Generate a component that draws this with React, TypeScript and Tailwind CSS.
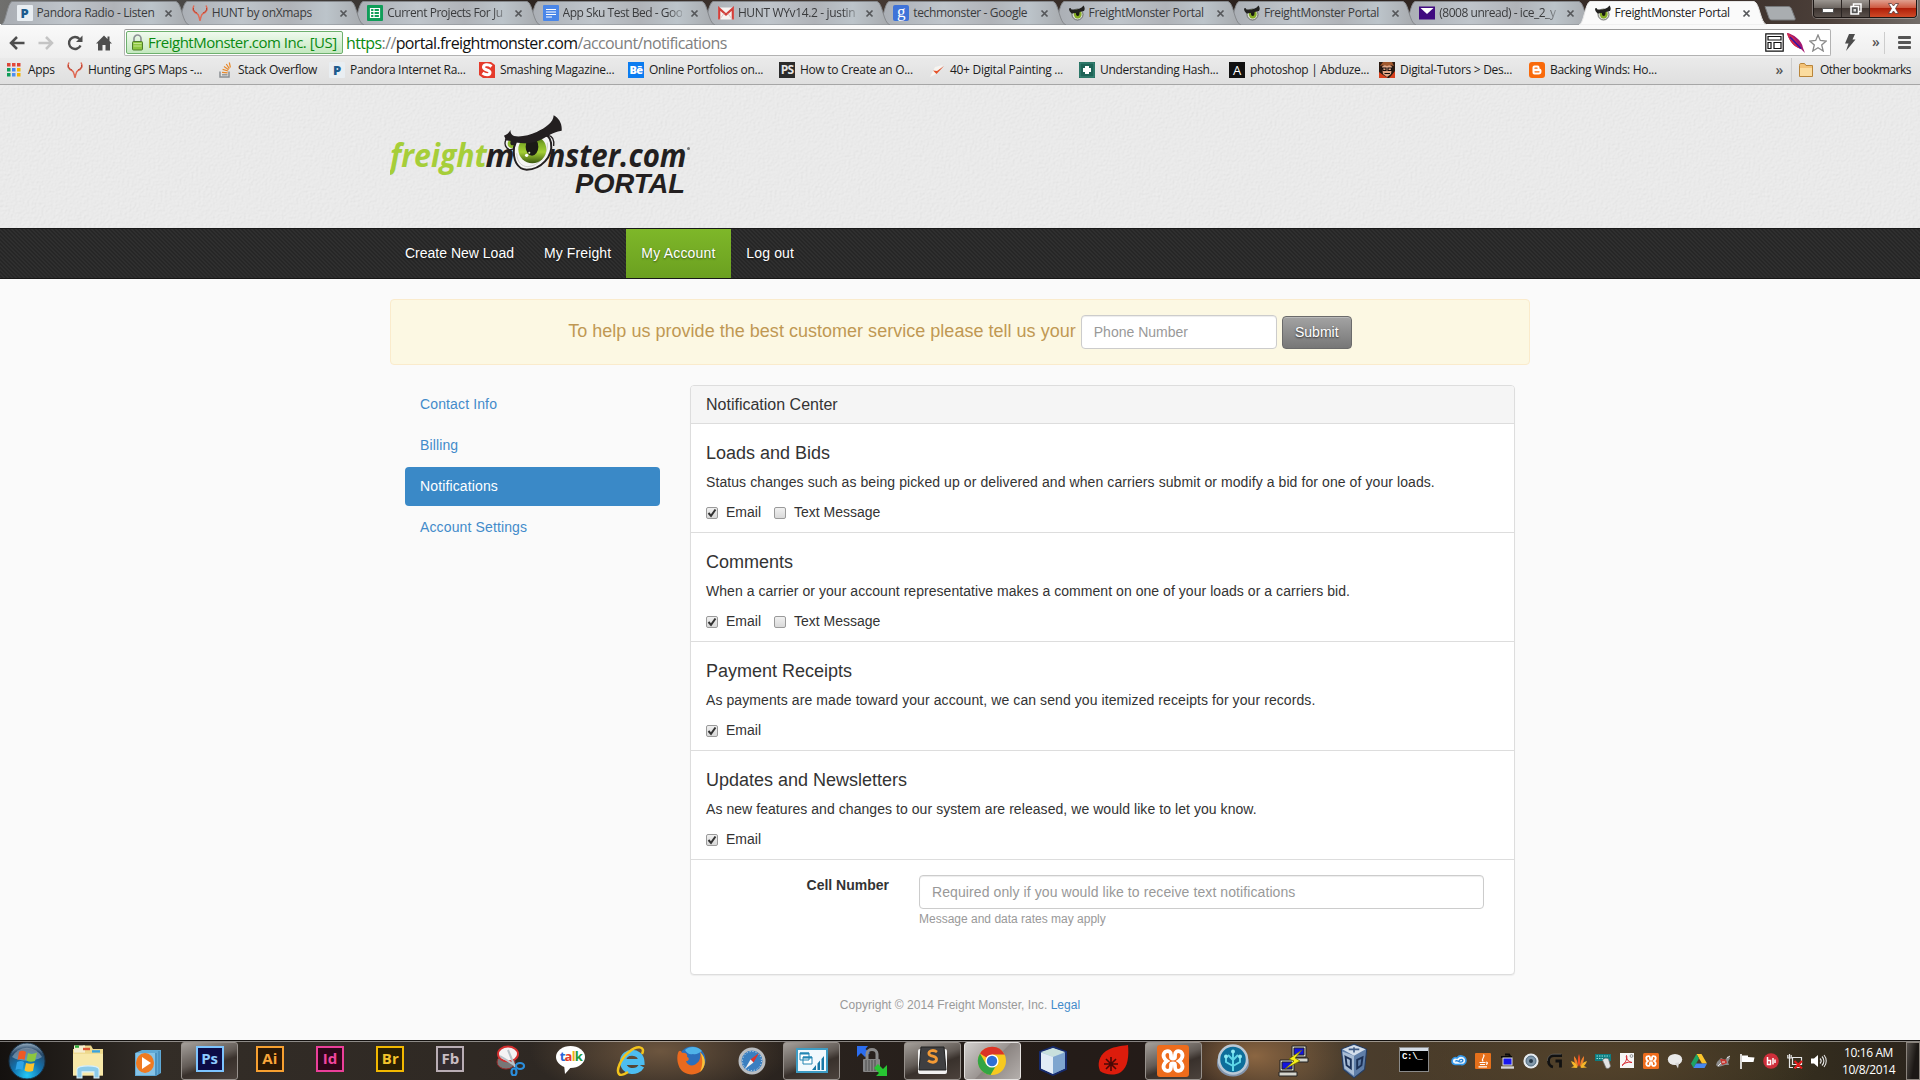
import React from "react";
import type { ReactNode } from "react";

const ui = "font-['Open_Sans',sans-serif]";

/* ---------- small brand icons ---------- */

function Svg({ s = 16, vb = "0 0 16 16", children }: { s?: number; vb?: string; children: ReactNode }) {
  return (
    <svg width={s} height={s} viewBox={vb} className="shrink-0" fill="none">
      {children}
    </svg>
  );
}

const Pandora = () => (
  <span className="flex h-4 w-4 shrink-0 items-center justify-center rounded-[1px] bg-[#e9eef2] font-['Open_Sans',sans-serif] text-[13px] leading-4 font-extrabold text-[#1d5c8e]">
    P
  </span>
);
const Antler = () => (
  <Svg>
    <path d="M2 .5C0 4 1 7 5 8.5C7 9.5 7 12 8 15.5C9 12 9 9.500 11 8.500C15 7 16 4 14 .5" stroke="#df6a55" strokeWidth="1.500" />
    <path d="M1.500 3C1 6 3 7 5 8M14.500 3C15 6 13 7 11 8" stroke="#b94331" strokeWidth="1" />
  </Svg>
);
const Sheets = () => (
  <Svg>
    <rect width="16" height="16" rx="1" fill="#0f9d58" />
    <path d="M3.500 3.500h9v9h-9zM3.500 6.500h9M3.500 9.500h9M7 3.500v9" stroke="#fff" strokeWidth="1.200" />
  </Svg>
);
const Docs = () => (
  <Svg>
    <rect width="16" height="16" rx="1" fill="#4a86e8" />
    <path d="M3 4.500h10M3 7h10M3 9.500h10M3 12h6" stroke="#fff" strokeWidth="1.200" />
  </Svg>
);
const Gmail = () => (
  <Svg>
    <rect y="2.500" width="16" height="12" rx="1" fill="#f6f2f1" />
    <path d="M1.200 14.500V3.500L8 9.500L14.800 3.500V14.500" stroke="#d23f3a" strokeWidth="2.200" />
    <path d="M2 14L6 8.500M14 14L10 8.500" stroke="#ddc9c7" />
  </Svg>
);
const Google = () => (
  <span className="flex h-4 w-4 shrink-0 items-center justify-center rounded-[2px] bg-[#3f73d8] pb-[3px] font-['Liberation_Serif',serif] text-[17px] leading-4 text-white">
    g
  </span>
);
const Monster = () => (
  <Svg>
    <ellipse cx="8.500" cy="9.500" rx="5.500" ry="5.500" fill="#d9dcd2" stroke="#444" strokeWidth=".7" />
    <ellipse cx="8.700" cy="9" rx="3.900" ry="4.600" fill="#86ad25" />
    <ellipse cx="8.700" cy="8" rx="1.800" ry="3" fill="#1a1a12" />
    <path d="M0 3.500L1.500 3L2.500 4.500C7 5 12 4 14.500 .5C16 2.500 16 4.500 15 6C11 6.500 10 8 6.500 8L2.500 8.500C1 7 0 5.500 0 3.500Z" fill="#22211f" />
  </Svg>
);
const Ymail = () => (
  <Svg>
    <rect y="1.500" width="16" height="13" fill="#400a80" />
    <path d="M1.500 3H14.500L8 9Z" fill="#fff" />
  </Svg>
);
const AppsGrid = () => (
  <Svg s={14} vb="0 0 14 14">
    {["#db4437", "#e5493a", "#db4437", "#0f9d58", "#4285f4", "#f4b400", "#0f9d58", "#4f8ff0", "#f4b400"].map((c, i) => (
      <rect key={i} x={(i % 3) * 5} y={Math.floor(i / 3) * 5} width="3.500" height="3.500" fill={c} />
    ))}
  </Svg>
);
const StackO = () => (
  <Svg>
    <path d="M3 9.500V15H12V9.500" stroke="#8b8f92" strokeWidth="1.500" />
    <path d="M5 12.800H10.500" stroke="#8b8f92" strokeWidth="1.300" />
    <path d="M5 10.300L10.600 10.900M5.600 7.400L11 9M7 4.600L11.600 7.800M9.300 2L12.300 6.600M12.300 .5L13.400 5.500" stroke="#e8892b" strokeWidth="1.200" />
  </Svg>
);
const Smash = () => (
  <Svg>
    <path d="M0 0H12L16 3V16H4L0 13Z" fill="#e53b2c" />
    <path d="M12.500 4.500C9 1.500 4 2.500 4.500 5.500C5 8.500 11 7.500 11 10.500C11 13.500 6 13 3.500 11" stroke="#fff" strokeWidth="3" />
  </Svg>
);
const Letter = ({ t, cls }: { t: string; cls: string }) => (
  <span className={`flex h-4 w-4 shrink-0 items-center justify-center leading-4 ${cls}`}>{t}</span>
);
const Paint = () => (
  <Svg>
    <path d="M1 15L6 5L14 3L7 12Z" fill="#f7f4f0" />
    <path d="M4 8.500L8 9L15 4L7.500 12Z" fill="#e5532a" />
  </Svg>
);
const Hash = () => (
  <Svg>
    <rect width="16" height="16" fill="#1e6457" />
    <rect x="1" y="1" width="14" height="14" stroke="#3c8b7c" />
    <path d="M6 4H10V6H12V10H10V12H6V10H4V6H6Z" fill="#fff" />
  </Svg>
);
const Tutor = () => (
  <Svg>
    <rect width="16" height="16" fill="#2a1a12" />
    <path d="M0 16V10L4 13L9 16ZM16 16V9L12 14L10 16Z" fill="#d9401c" />
    <path d="M3 5C4 2 12 2 13 5L12 12L8 15L4 12Z" fill="#e2a685" />
    <path d="M1 4L4 0H13L15 4L11 3L8 4L5 3Z" fill="#a1592e" />
    <path d="M3.500 6H7V8.500H4ZM9 6H12.500V8.500H9ZM5.500 11.500H11" stroke="#141010" strokeWidth="1.200" />
  </Svg>
);
const Blogger = () => (
  <Svg>
    <rect width="16" height="16" rx="3" fill="#f96a0b" />
    <path d="M5.500 3.500H8.500C10.500 3.500 10.500 5 10.500 6.500C12.500 7 12.500 8 12.500 9.500C12.500 11.500 11.500 12.500 9.500 12.500H5.500C4 12.500 3.500 11.500 3.500 10V6C3.500 4.500 4 3.500 5.500 3.500Z" fill="#fff" />
    <path d="M6 6.200H8M6 9.800H10" stroke="#f96a0b" strokeWidth="1.300" strokeLinecap="round" />
  </Svg>
);
const Folder = () => (
  <Svg>
    <path d="M1.500 3.500C1.500 2 2 1.500 3 1.500H6.500L8 3.500H14.500V14.500H1.500Z" fill="#f3c277" stroke="#b9853a" />
    <path d="M2 6H14V14H2Z" fill="#fbdc9f" />
  </Svg>
);
const Xampp = ({ s = 16 }: { s?: number }) => (
  <Svg s={s}>
    <rect width="16" height="16" rx="1.500" fill="#ee6c1c" />
    <path d="M4 3.500C6 2.500 7 3.500 7 5V6C7 7 9 7 9 6V5C9 3.500 10 2.500 12 3.500C13.500 5 12.500 7 11 8C12.500 9 13.500 11 12 12.500C10 13.500 9 12.500 9 11V10C9 9 7 9 7 10V11C7 12.500 6 13.500 4 12.500C2.500 11 3.500 9 5 8C3.500 7 2.500 5 4 3.500Z" stroke="#fff" strokeWidth="1.900" />
  </Svg>
);

/* ---------- tab strip ---------- */

const tabs: { title: string; icon: ReactNode; active?: boolean }[] = [
  { title: "Pandora Radio - Listen", icon: <Pandora /> },
  { title: "HUNT by onXmaps", icon: <Antler /> },
  { title: "Current Projects For Ju", icon: <Sheets /> },
  { title: "App Sku Test Bed - Goo", icon: <Docs /> },
  { title: "HUNT WYv14.2 - justin", icon: <Gmail /> },
  { title: "techmonster - Google", icon: <Google /> },
  { title: "FreightMonster Portal", icon: <Monster /> },
  { title: "FreightMonster Portal", icon: <Monster /> },
  { title: "(8008 unread) - ice_2_y", icon: <Ymail /> },
  { title: "FreightMonster Portal", icon: <Monster />, active: true },
];

function TabStrip() {
  return (
    <div className="relative flex h-6 bg-[linear-gradient(90deg,#70706e_0,#4c4a48_8%,#2d2521_28%,#463a33_45%,#2a201c_66%,#3c302b_90%,#4b3f39_95%,#736d69_100%)]">
      {tabs.map((t, i) => (
        <div key={i} className="relative flex h-6 w-[175.35px] shrink-0 items-center pt-0.5 pl-[16.500px]" style={{ zIndex: t.active ? 30 : 20 - i }}>
          <svg className="absolute top-0 left-0" width="192" height="25" viewBox="0 0 192 25">
            <defs>
              <linearGradient id={`tab${i}`} x1="0" y1="0" x2="1" y2="0">
                <stop offset="0" stopColor="#a9adb3" />
                <stop offset=".35" stopColor="#bfc5cb" />
                <stop offset=".6" stopColor="#b0b3b8" />
                <stop offset=".8" stopColor="#bcc4ca" />
                <stop offset="1" stopColor="#a6a9ad" />
              </linearGradient>
            </defs>
            <path
              d="M1 25C6 24 7 3 12 1.500H176C182 3 182 23 189 25Z"
              fill={t.active ? "#fafafa" : `url(#tab${i})`}
              stroke={t.active ? "#e6e6e6" : "#85888c"}
              strokeWidth="1"
            />
          </svg>
          <span className="relative flex items-center">
            {t.icon}
            <span
              className={`ml-1 w-[119px] text-[12px] leading-4 whitespace-nowrap ${
                i === 2 || i === 3 || i === 4 || i === 8 ? "[mask-image:linear-gradient(90deg,#000_88%,rgba(0,0,0,.25))]" : ""
              } ${i === 2 || i === 3 || i === 8 ? "tracking-[-0.47px]" : "tracking-[-0.35px]"} ${t.active ? "text-[#222]" : "text-[#3a3b3d]"}`}
            >
              {t.title}
            </span>
            <svg width="9" height="9" viewBox="0 0 9 9" className="ml-[8px]">
              <path d="M1.500 1.500L7.500 7.500M7.500 1.500L1.500 7.500" stroke="#55575a" strokeWidth="1.700" />
            </svg>
          </span>
        </div>
      ))}
      <svg width="32" height="16" viewBox="0 0 32 16" className="relative z-40 mt-1.5 ml-[11px] shrink-0">
        <path d="M1 .5H24C26 .5 27 1.500 27.500 3L31 12C31.500 13.500 31 14 30 14H8C6.500 14 5.500 13.500 5 12Z" fill="#a9adb0" stroke="#77797b" />
      </svg>
      <div className="absolute top-0 right-[3px] z-40 flex h-[18px] w-[104px] overflow-hidden rounded-b-[4px] border border-t-0 border-[#1c1715] text-white ring-1 ring-white/30">
        <span className="flex w-[28px] items-center justify-center border-r border-[#2a2422] bg-[linear-gradient(#9b9691,#6f6863_45%,#3e3531_50%,#59504b)]">
          <span className="mt-1 h-[5px] w-[12px] border border-[#555] bg-white" />
        </span>
        <span className="flex w-[28px] items-center justify-center border-r border-[#2a2422] bg-[linear-gradient(#9b9691,#6f6863_45%,#3e3531_50%,#59504b)]">
          <svg width="12" height="12" viewBox="0 0 12 12" fill="none">
            <path d="M3.500 3V1H11V8.500H9" stroke="#fff" strokeWidth="1.500" />
            <rect x="1" y="3.500" width="7.500" height="7.500" fill="#555" stroke="#fff" strokeWidth="1.500" />
            <rect x="3.500" y="6" width="2.500" height="2.500" fill="#ddd" />
          </svg>
        </span>
        <span className="flex flex-1 items-center justify-center bg-[linear-gradient(#e0a08f,#cf5a41_45%,#b01f08_50%,#cf4a28)]">
          <svg width="13" height="11" viewBox="0 0 13 11">
            <path d="M1.500 .5H4.500L6.500 3L8.500 .5H11.500L8.500 5.500L11.500 10.500H8.500L6.500 8L4.500 10.500H1.500L4.500 5.500Z" fill="#fff" stroke="#5a3a38" strokeWidth=".8" />
          </svg>
        </span>
      </div>
    </div>
  );
}

/* ---------- toolbar & bookmarks ---------- */

function Toolbar() {
  return (
    <div className="flex h-[34px] items-center bg-[linear-gradient(#fafafa,#eeeeee)] pt-[3px]">
      <div className="flex w-[124px] items-center gap-[13px] pl-[9px] text-[#4e4e4e]">
        <svg width="16" height="16" viewBox="0 0 16 16" fill="none" stroke="currentColor" strokeWidth="2.500">
          <path d="M8 2L2 8L8 14M2 8H15.500" />
        </svg>
        <svg width="16" height="16" viewBox="0 0 16 16" fill="none" stroke="#c4c4c4" strokeWidth="2.500">
          <path d="M8 2L14 8L8 14M14 8H.5" />
        </svg>
        <svg width="16" height="16" viewBox="0 0 16 16" fill="none">
          <path d="M13.500 10.500A6 6 0 1 1 12.500 4" stroke="currentColor" strokeWidth="2.400" />
          <path d="M15.500 .5V7H9Z" fill="currentColor" />
        </svg>
        <svg width="16" height="16" viewBox="0 0 16 16" fill="currentColor">
          <path d="M8 .5L11.500 4V1.500H13.500V6L16 8.500H14V15.500H9.500V10H6.500V15.500H2V8.500H0Z" />
        </svg>
      </div>
      <div className="flex h-[27px] flex-1 items-center rounded-[2px] border border-[#b2b2b2] border-t-[#9c9c9c] bg-white">
        <div className="ml-px flex h-[23px] w-[217px] shrink-0 items-center rounded-[2px] border border-[#6eb06e] bg-[linear-gradient(#f0faee,#c4e8c0)] pl-[4px] text-[15px] tracking-[-0.51px] whitespace-nowrap text-[#0b8a12]">
          <svg width="13" height="17" viewBox="0 0 13 17" fill="none" className="mr-[4px] shrink-0">
            <path d="M3 8V4.500A3.500 3.500 0 0 1 10 4.500V8" stroke="#8d9496" strokeWidth="1.700" />
            <rect x="1.500" y="7.500" width="10" height="8.500" rx="1" fill="#8cc63f" stroke="#4e7d2c" />
            <path d="M2.500 9.500H10.500M2.500 12H10.500" stroke="#c3e58e" />
          </svg>
          FreightMonster.com Inc. [US]
        </div>
        <div className="ml-[3px] flex-1 text-[16px] tracking-[-0.62px] whitespace-nowrap text-[#808080]">
          <span className="text-[#0b8a12]">https</span>://<span className="text-[#111]">portal.freightmonster.com</span>/account/notifications
        </div>
        <svg width="19" height="19" viewBox="0 0 19 19" fill="#fff" stroke="#111" strokeWidth="1.200" className="mr-[3px]">
          <path d="M.8 .8H18.200V18.200H.8ZM3 3.500H16V7H3ZM3 9.500H6V15.500H3ZM9 9.500H16V15.500H9Z" />
        </svg>
        <svg width="18" height="20" viewBox="0 0 18 20" className="mr-[4px]">
          <path d="M0 0C6 1 15 7 16 15L18 20L14 16C7 14 2 8 0 0Z" fill="#a3166f" />
          <path d="M0 0C5 2 9 6 11 11L14 16C7 14 2 8 0 0Z" fill="#d02a4c" />
          <path d="M3 4L14 15.500" stroke="#3312a8" strokeWidth="1.700" />
        </svg>
        <svg width="18" height="18" viewBox="0 0 18 18" fill="#fff" stroke="#8a8a8a" strokeWidth="1.300" className="mr-[3px]">
          <path d="M9 1L11.300 6.500L17.200 7L12.700 11L14.200 17L9 13.800L3.800 17L5.300 11L.8 7L6.700 6.500Z" />
        </svg>
      </div>
      <div className="flex w-[89px] items-center">
        <svg width="12" height="17" viewBox="0 0 12 17" className="ml-[13px]">
          <path d="M5 0H11L8.500 5.500H11.500L2 17L4.500 9.500H1Z" fill="#4c4c4c" />
        </svg>
        <span className="ml-[16px] pb-0.5 text-[14px] font-semibold text-[#555]">»</span>
        <span className="ml-1 h-[22px] w-px bg-[#cdcdcd]" />
        <span className="ml-[13px] flex w-[13px] flex-col gap-[2px]">
          <i className="h-[3px] rounded-[1px] bg-[#555]" />
          <i className="h-[3px] rounded-[1px] bg-[#555]" />
          <i className="h-[3px] rounded-[1px] bg-[#555]" />
        </span>
      </div>
    </div>
  );
}

const bookmarks: { t: string; w: string; icon: ReactNode }[] = [
  { t: "Apps", w: "w-[60px]", icon: <span className="w-4"><AppsGrid /></span> },
  { t: "Hunting GPS Maps -...", w: "w-[150px]", icon: <Antler /> },
  { t: "Stack Overflow", w: "w-[112px]", icon: <StackO /> },
  { t: "Pandora Internet Ra...", w: "w-[150px]", icon: <Pandora /> },
  { t: "Smashing Magazine...", w: "w-[149px]", icon: <Smash /> },
  { t: "Online Portfolios on...", w: "w-[151px]", icon: <Letter t="Bē" cls="bg-[#0b7cf0] text-[11px] font-extrabold tracking-[-0.5px] text-white" /> },
  { t: "How to Create an O...", w: "w-[150px]", icon: <Letter t="PS" cls="bg-[#2b2b2b] text-[12px] font-bold tracking-[-0.8px] text-[#e6e6e6]" /> },
  { t: "40+ Digital Painting ...", w: "w-[150px]", icon: <Paint /> },
  { t: "Understanding Hash...", w: "w-[150px]", icon: <Hash /> },
  { t: "photoshop | Abduze...", w: "w-[150px]", icon: <Letter t="A" cls="bg-[#111] text-[13px] text-white" /> },
  { t: "Digital-Tutors > Des...", w: "w-[150px]", icon: <Tutor /> },
  { t: "Backing Winds: Ho...", w: "w-[150px]", icon: <Blogger /> },
];

function Bookmarks() {
  return (
    <div className="flex h-[27px] items-center border-b border-[#a6a6a6] bg-[linear-gradient(#eaeaea,#dfdfdf)] pb-0.5 pl-[7px] text-[12px] tracking-[-0.3px] text-[#1c1c1c]">
      {bookmarks.map((b) => (
        <div key={b.t} className={`flex shrink-0 items-center gap-[5px] whitespace-nowrap ${b.w}`}>
          {b.icon}
          {b.t}
        </div>
      ))}
      <span className="ml-auto pb-0.5 text-[14px] font-semibold text-[#555]">»</span>
      <span className="ml-[8px] h-6 w-px bg-[#cdcdcd]" />
      <span className="flex w-[128px] items-center gap-[6px] pl-[6px] tracking-[-0.5px]">
        <Folder />
        Other bookmarks
      </span>
    </div>
  );
}

/* ---------- page ---------- */

function Logo() {
  return (
    <svg width="310" height="90" viewBox="0 0 310 90" className="block">
      <defs>
        <linearGradient id="iris" x1="0" y1="0" x2="0" y2="1">
          <stop offset="0" stopColor="#3d5c12" />
          <stop offset=".3" stopColor="#7fae26" />
          <stop offset=".6" stopColor="#a4cf35" />
          <stop offset="1" stopColor="#39560f" />
        </linearGradient>
      </defs>
      <g fontFamily="'Open Sans'" fontWeight="700" fontStyle="italic" fontSize="32">
        <text x="0" y="57" textLength="97" lengthAdjust="spacingAndGlyphs" fill="#a6ce39">freight</text>
        <text x="95.500" y="57" textLength="29" lengthAdjust="spacingAndGlyphs" fill="#231f20">m</text>
        <text x="157.500" y="57" textLength="139" lengthAdjust="spacingAndGlyphs" fill="#231f20">nster.com</text>
      </g>
      <text x="185" y="82.500" fontFamily="'Liberation Sans'" fontWeight="700" fontStyle="italic" fontSize="28" textLength="110" lengthAdjust="spacingAndGlyphs" fill="#231f20">
        PORTAL
      </text>
      <circle cx="298.500" cy="38.500" r="1.500" fill="#777" />
      <g transform="translate(-20 -20) scale(.33333)">
        <ellipse cx="422" cy="160" rx="17" ry="19" fill="#f0f0ee" stroke="#231f20" strokeWidth="4" />
        <ellipse cx="425" cy="161" rx="12" ry="13" fill="#8dbb2b" />
        <ellipse cx="428" cy="158" rx="7" ry="8" fill="#231f20" />
        <path d="M432 172C428 210 442 238 470 239C512 239 550 200 543 158C540 140 530 134 520 138L440 150Z" fill="#f4f4f3" stroke="#231f20" strokeWidth="6" />
        <path d="M440 190C442 218 456 230 474 230C506 228 536 194 532 158" fill="none" stroke="#b9b9b9" strokeWidth="2" />
        <ellipse cx="487" cy="178" rx="42" ry="42" fill="url(#iris)" />
        <ellipse cx="486" cy="170" rx="19" ry="27" fill="#1b1a16" />
        <circle cx="470" cy="196" r="5" fill="#fff" />
        <circle cx="478" cy="188" r="3" fill="#e6f3c2" />
        <path d="M534 136C548 138 553 150 551 168" fill="none" stroke="#231f20" strokeWidth="4" />
        <path d="M551 76C566 84 577 100 575 122C560 124 545 130 533 138C515 149 500 156 480 159C460 161 440 160 428 154L404 150C408 146 404 142 402 137C411 134 418 128 421 120C422 130 424 134 432 138C452 142 478 136 500 126C526 114 550 98 551 76Z" fill="#231f20" />
      </g>
    </svg>
  );
}

function Check({ label, on }: { label: string; on?: boolean }) {
  return (
    <label className="mr-[13px] flex items-center">
      <span className="mt-px flex h-3 w-3 items-center justify-center rounded-[2px] border border-[#9a9a9a] bg-[linear-gradient(#f0f0f0,#d9d9d9)]">
        {on && (
          <svg width="10" height="10" viewBox="0 0 10 10" fill="none">
            <path d="M1.500 5L4 7.800L8.500 1.500" stroke="#333" strokeWidth="2" />
          </svg>
        )}
      </span>
      <span className="ml-2">{label}</span>
    </label>
  );
}

const sections = [
  { h: "Loads and Bids", d: "Status changes such as being picked up or delivered and when carriers submit or modify a bid for one of your loads.", track: "tracking-[0.085px]", text: true },
  { h: "Comments", d: "When a carrier or your account representative makes a comment on one of your loads or a carriers bid.", track: "tracking-[0.05px]", text: true },
  { h: "Payment Receipts", d: "As payments are made toward your account, we can send you itemized receipts for your records.", track: "tracking-[0.085px]" },
  { h: "Updates and Newsletters", d: "As new features and changes to our system are released, we would like to let you know.", track: "tracking-[0.06px]" },
];

function Page() {
  return (
    <div className="h-[955px] bg-[#fafafa] font-['Liberation_Sans',Arial,sans-serif] text-[14px] leading-5 text-[#333]">
      <header className="relative h-[143px] bg-[#e9e9e9]">
        <svg className="absolute inset-0 h-full w-full opacity-40">
          <filter id="paper" x="0" y="0" width="100%" height="100%">
            <feTurbulence type="fractalNoise" baseFrequency=".42" numOctaves="2" seed="4" result="n" />
            <feDiffuseLighting in="n" surfaceScale=".5" diffuseConstant="1.120" lightingColor="#ededed">
              <feDistantLight azimuth="225" elevation="62" />
            </feDiffuseLighting>
          </filter>
          <rect width="100%" height="100%" filter="url(#paper)" />
        </svg>
        <div className="relative mx-auto w-[1140px] pt-[25px]">
          <Logo />
        </div>
      </header>
      <nav className="h-[51px] border-y border-[#181818] bg-[#2a2a2a] bg-[linear-gradient(45deg,#262626_25%,#2f2f2f_25%,#2f2f2f_50%,#262626_50%,#262626_75%,#2f2f2f_75%)] bg-[length:4px_4px]">
        <div className="mx-auto flex h-full w-[1140px] items-center text-white [text-shadow:0_1px_2px_rgba(0,0,0,.5)]">
          <a className="flex h-full items-center px-[15px] pb-px">Create New Load</a>
          <a className="flex h-full items-center px-[15px] pb-px tracking-[0.12px]">My Freight</a>
          <a className="flex h-full w-[105px] items-center bg-[linear-gradient(#7eb729,#6ba020)] pb-px pl-[15px] tracking-[0.2px]">My Account</a>
          <a className="flex h-full items-center px-[15px] pb-px tracking-[0.15px]">Log out</a>
        </div>
      </nav>
      <main className="mx-auto mt-5 w-[1140px]">
        <div className="flex h-[66px] items-center justify-center rounded-[4px] border border-[#faebcc] bg-[#fcf8e3]">
          <span className="pb-0.5 text-[18px] tracking-[0.02px] text-[#c09853]">To help us provide the best customer service please tell us your</span>
          <span className="ml-[5px] flex h-[34px] w-[196px] items-center rounded-[4px] border border-[#ccc] bg-white px-3 text-[#999] shadow-[inset_0_1px_1px_rgba(0,0,0,.075)]">
            Phone Number
          </span>
          <span className="mt-px ml-[5px] flex h-[33px] w-[70px] items-center justify-center rounded-[4px] border border-[#6b6b6b] bg-[linear-gradient(#a3a3a3,#777)] pb-0.5 text-white shadow-[inset_0_1px_0_rgba(255,255,255,.25)] [text-shadow:0_1px_2px_rgba(0,0,0,.7)]">
            Submit
          </span>
        </div>
        <div className="mt-5 flex">
          <ul className="ml-[15px] flex w-[255px] flex-col gap-0.5 tracking-[0.13px] text-[#428bca]">
            <li className="flex h-[39px] items-center px-[15px] pb-0.5">Contact Info</li>
            <li className="flex h-[39px] items-center px-[15px] pb-0.5">Billing</li>
            <li className="flex h-[39px] items-center rounded-[4px] bg-[#3a89c7] px-[15px] pb-0.5 text-white">Notifications</li>
            <li className="flex h-[39px] items-center px-[15px] pb-0.5">Account Settings</li>
          </ul>
          <section className="ml-[30px] flex h-[590px] w-[825px] flex-col rounded-[4px] border border-[#ddd] bg-white shadow-[0_1px_1px_rgba(0,0,0,.05)]">
            <h3 className="flex h-[37px] shrink-0 items-center rounded-t-[3px] bg-[#f5f5f5] px-[15px] text-[16px]">Notification Center</h3>
            {sections.map((s) => (
              <div key={s.h} className="h-[109px] shrink-0 border-t border-[#ddd] px-[15px] pt-[19px]">
                <h4 className="text-[18px] leading-5">{s.h}</h4>
                <p className={`mt-[9px] whitespace-nowrap ${s.track}`}>{s.d}</p>
                <div className="mt-[10px] flex">
                  <Check label="Email" on />
                  {s.text && <Check label="Text Message" />}
                </div>
              </div>
            ))}
            <div className="flex flex-1 border-t border-[#ddd] pt-[15px]">
              <strong className="w-[198px] text-right font-bold">Cell Number</strong>
              <div className="ml-[30px] w-[565px]">
                <div className="flex h-[34px] items-center rounded-[4px] border border-[#ccc] px-3 tracking-[0.09px] text-[#999] shadow-[inset_0_1px_1px_rgba(0,0,0,.075)]">
                  Required only if you would like to receive text notifications
                </div>
                <p className="text-[12px] text-[#999]">Message and data rates may apply</p>
              </div>
            </div>
          </section>
        </div>
        <p className="mt-5 text-center text-[12px] tracking-[0.03px] text-[#999]">
          Copyright © 2014 Freight Monster, Inc. <a className="text-[#428bca]">Legal</a>
        </p>
      </main>
    </div>
  );
}

/* ---------- taskbar ---------- */

const Adobe = ({ t, cls }: { t: string; cls: string }) => (
  <span className={`mb-1 flex h-[26px] w-[28px] items-center justify-center border-2 text-[15px] leading-none font-bold ${cls}`}>{t}</span>
);

const apps: { on?: "open" | "focus"; icon: ReactNode }[] = [
  { on: "open", icon: <Adobe t="Ps" cls="border-[#7cc4ff] bg-[#0c0b46] text-[#8ecbff]" /> },
  { icon: <Adobe t="Ai" cls="border-[#f7a030] bg-[#2a1806] text-[#f9a53a]" /> },
  { icon: <Adobe t="Id" cls="border-[#ec3f9a] bg-[#2c0719] text-[#f0459f]" /> },
  { icon: <Adobe t="Br" cls="border-[#f2b800] bg-[#2a2003] text-[#f4c52c]" /> },
  { icon: <Adobe t="Fb" cls="border-[#b9adb4] bg-[#332c30] text-[#c9bdc4]" /> },
  {
    icon: (
      <Svg s={31} vb="0 0 31 31">
        <ellipse cx="11" cy="17" rx="9" ry="7" fill="#777" stroke="#9b2a2a" />
        <ellipse cx="13" cy="9" rx="10" ry="7.500" fill="#f5f3f4" stroke="#d32f2f" strokeWidth="2" />
        <path d="M5 11L21 21M13 5L20 22" stroke="#b9c2c8" strokeWidth="2" />
        <ellipse cx="25" cy="21" rx="4" ry="3" stroke="#2b8edc" strokeWidth="2.200" />
        <ellipse cx="19" cy="27" rx="2.500" ry="3.500" stroke="#2b8edc" strokeWidth="2.200" />
      </Svg>
    ),
  },
  {
    icon: (
      <span className="relative -mt-2 flex h-[22px] w-[29px] items-center justify-center rounded-[50%] bg-white text-[13px] leading-none font-bold tracking-[-0.8px]">
        <svg width="10" height="10" viewBox="0 0 10 10" className="absolute -bottom-[6px] left-[8px]">
          <path d="M0 0L1 10L9 1Z" fill="#fff" />
        </svg>
        <span className="relative text-[#2765d8]">t</span>
        <span className="relative text-[#e23a2b]">a</span>
        <span className="relative text-[#efaf14]">l</span>
        <span className="relative text-[#1d9b3c]">k</span>
      </span>
    ),
  },
  {
    icon: (
      <Svg s={33} vb="0 0 33 33">
        <path d="M26.500 22C22 30 8 28.500 8 17.500C8 6 26 5.500 26.500 18H10" stroke="#4dbdf0" strokeWidth="6" />
        <path d="M27 10C31 2 22 1 14 8C5 15 1 27 4 30C6 32 10 30 13 28" stroke="#f2c31c" strokeWidth="2.500" />
      </Svg>
    ),
  },
  {
    icon: (
      <Svg s={31} vb="0 0 31 31">
        <circle cx="16" cy="15" r="13.500" fill="#2c6fbb" />
        <path d="M9 5C13 1 22 1 26 6C23 8 20 10 17 9C13 10 11 8 9 5Z" fill="#4fb3e8" />
        <path d="M2 8C3 5 5 5 6 8C9 7 12 9 11 12C14 13 13 16 10 16C11 21 18 22 21 18C24 16 25 11 24 7C30 13 30 22 24 27C16 32 5 29 2.500 20C1 16 1 11 2 8Z" fill="#ea6a1e" />
        <path d="M24 7C31 13 30 22 24 27C27 20 27 13 24 7Z" fill="#f8c33a" />
      </Svg>
    ),
  },
  {
    icon: (
      <Svg s={28} vb="0 0 28 28">
        <circle cx="14" cy="14" r="12" fill="#3a7fc0" stroke="#b9bdc1" strokeWidth="3" />
        <circle cx="14" cy="14" r="9.500" stroke="#dfeaf4" strokeDasharray="1 2" />
        <path d="M21 6L15.500 15.500L12.500 12.500Z" fill="#e0342a" />
        <path d="M7 22L15.500 15.500L12.500 12.500Z" fill="#f2f2f2" />
      </Svg>
    ),
  },
  {
    on: "open",
    icon: (
      <Svg s={32} vb="0 0 32 32">
        <rect x="1" y="4" width="30" height="23" fill="#f2f9fd" stroke="#3d9cc4" strokeWidth="2" />
        <path d="M4 8H13V15H4ZM7 12H16V19H7Z" fill="#fff" stroke="#2486b3" strokeWidth="1" />
        <path d="M4 8.500H13M7 12.500H16" stroke="#2486b3" strokeWidth="2" />
        <path d="M16 25L20 20V25ZM21.500 25V18.500L24 15.500V25ZM25.500 25V14L28 11V25Z" fill="#1577a6" />
      </Svg>
    ),
  },
  {
    icon: (
      <Svg s={32} vb="0 0 32 32">
        <path d="M1 1H12L9.500 4L14 8L9 12L5 8L1 12Z" fill="#2b6df0" />
        <path d="M11 17V9C11 3 21 3 21 9V17" stroke="#8a8a8a" strokeWidth="3" />
        <rect x="7" y="14" width="17" height="13" rx="1" fill="#858585" />
        <path d="M10 15V26M13 15V26M16 15V26M19 15V26" stroke="#4d4d4d" />
        <path d="M31 31H20L23 28L18 23L22 19L27 24L31 20Z" fill="#27c532" />
      </Svg>
    ),
  },
  {
    on: "open",
    icon: (
      <Svg s={31} vb="0 0 31 31">
        <rect x="1" y="4" width="29" height="25" rx="2" fill="#f1f1f1" />
        <path d="M4 2H27L29 25H2Z" fill="#3f3f41" stroke="#222" />
        <path d="M20 7C16 4 11 6 12 9C13 12 20 10.500 19.500 14.500C19 18 14 18 11 15.500" stroke="#f39a35" strokeWidth="2.800" />
      </Svg>
    ),
  },
  {
    on: "focus",
    icon: (
      <Svg s={30} vb="0 0 30 30">
        <circle cx="15" cy="15" r="14" fill="#f7c91f" />
        <path d="M15 15L3 7.500A14 14 0 0 1 27.500 8.500H15Z" fill="#dc3427" />
        <path d="M3 7.500A14 14 0 0 0 13.500 29L20 18L9 18Z" fill="#33a544" />
        <circle cx="15" cy="15" r="6.600" fill="#fff" />
        <circle cx="15" cy="15" r="5.200" fill="#2f6fd3" />
      </Svg>
    ),
  },
  {
    icon: (
      <Svg s={32} vb="0 0 32 32">
        <path d="M16 2L29 7V24L16 30L3 24V7Z" fill="#a8c6e4" stroke="#162a6c" strokeWidth="2" />
        <path d="M16 3L28 7L16 12L4 7Z" fill="#c9e0dd" />
        <path d="M16 12L28 7.500V23.500L16 29Z" fill="#7fa5cf" />
        <path d="M16 12V29L4 23.500V7.500Z" fill="#e2ecf6" />
      </Svg>
    ),
  },
  {
    icon: (
      <Svg s={32} vb="0 0 32 32">
        <path d="M31 0C32 11 31 22 24 27C18 31 8 30 3 26C0 19 2 11 9 6C15 2 23 1 31 0Z" fill="#dc1c0c" />
        <path d="M14 12V26M7 19H21M9 14L19 24M19 14L9 24" stroke="#4a0805" strokeWidth="1.600" />
      </Svg>
    ),
  },
  { on: "open", icon: <Xampp s={32} /> },
  {
    icon: (
      <Svg s={34} vb="0 0 34 34">
        <ellipse cx="17" cy="19" rx="16" ry="13.500" fill="#8193ab" />
        <circle cx="17" cy="15.500" r="14" fill="#0d6e9b" stroke="#bac9d6" strokeWidth="2.500" />
        <path d="M17 27V9M17 22L10 18V13M17 22L24 18V13M17 16L12 11M17 16L22 11" stroke="#5fd6e8" strokeWidth="2" />
        <circle cx="17" cy="7.500" r="2" fill="#8de9f3" />
        <circle cx="10" cy="12.500" r="2" fill="#8de9f3" />
        <circle cx="24" cy="12.500" r="2" fill="#8de9f3" />
      </Svg>
    ),
  },
  {
    icon: (
      <Svg s={32} vb="0 0 32 32">
        <g stroke="#222" strokeWidth="1">
          <path d="M14 1H28V12H14ZM12 13H30V17H12Z" fill="#d6d6ce" />
          <path d="M2 15H16V26H2ZM1 27H19V31H1Z" fill="#d6d6ce" />
          <path d="M16 3H26V10H16ZM4 17H14V24H4Z" fill="#1414dd" />
        </g>
        <path d="M24 5L11 14L16 16L7 24L22 16L17 13Z" fill="#f5ee1a" stroke="#6e6a00" strokeWidth=".7" />
      </Svg>
    ),
  },
  {
    icon: (
      <Svg s={36} vb="0 0 34 34">
        <path d="M17 1L29 6L27 25L17 33L7 25L5 6Z" fill="#5f7ea8" stroke="#243b60" />
        <path d="M17 2L28 6L17 12L6 6Z" fill="#d3deeb" />
        <path d="M17 12V31L8 24L6 8Z" fill="#a9bdd5" />
        <path d="M9 13L14 15.500V24L10 21ZM20 16L25 13.500L24 21L20 24Z" stroke="#1c3157" strokeWidth="1.800" />
        <path d="M12 6H22M17 4V9" stroke="#3e5b85" strokeWidth="1.500" />
      </Svg>
    ),
  },
  {
    icon: (
      <span className="-mt-0.5 flex h-[25px] w-[30px] flex-col border border-[#8a8a8a] bg-black">
        <span className="h-[3px] bg-[#d5dde6]" />
        <span className="pt-[2px] pl-[2px] font-['Liberation_Mono',monospace] text-[9px] leading-none font-bold tracking-[-0.3px] text-white">C:\_</span>
      </span>
    ),
  },
];

const tray: ReactNode[] = [
  <Svg>
    <path d="M1 8A3.500 3.500 0 0 1 6 5A5 5 0 0 1 15 8A4 4 0 0 1 10 11.500H4A3.500 3.500 0 0 1 1 8Z" fill="#eaf5ff" stroke="#3497e8" strokeWidth="1.600" />
    <path d="M4.500 8.500C6 5.500 8 11 11.500 8.500C13 6 9 5.500 8 8" stroke="#2384da" strokeWidth="1.400" />
  </Svg>,
  <Svg>
    <rect width="16" height="16" rx="1" fill="#e5701b" />
    <path d="M8.500 1.500C11 4 5.500 5 8 8.500M4.500 9.500H10.500M5 11.500H10M3.500 13.800H12M11 9C13 9 12.500 11 11 11.500" stroke="#fff" strokeWidth="1.200" />
  </Svg>,
  <Svg>
    <path d="M2 4H13M6 1.500H10L12 5" stroke="#0a0a0a" strokeWidth="2" />
    <rect x="4" y="5" width="9" height="7" fill="#1818ee" stroke="#ddd" />
    <path d="M2 14.500H15" stroke="#d6d6d6" strokeWidth="2.400" />
  </Svg>,
  <Svg>
    <circle cx="8" cy="8" r="7.600" fill="#e5eaee" />
    <circle cx="8" cy="8" r="5" fill="#8198aa" stroke="#4f6a80" />
    <circle cx="8" cy="8" r="2" fill="#26394a" />
  </Svg>,
  <Svg>
    <path d="M15 2.500H7C3 2.500 1.500 5 1.500 8S3.500 13.500 6 14M8.500 8H13.500V14.500" stroke="#111" strokeWidth="2.800" />
    <path d="M14.500 1.200H7C3 1 .3 4 .3 8" stroke="#777" strokeWidth=".6" />
  </Svg>,
  <Svg>
    <path d="M8 14C6 9 7 4 8 1C9 4 10 9 8 14Z" fill="#f04e23" />
    <path d="M7 14C3 10 3 6 3 3C6 6 7 10 7 14ZM9 14C13 10 13 6 13 3C10 6 9 10 9 14Z" fill="#f1812b" />
    <path d="M6.500 14.500C3 14 1 11 0 8C4 9 6 11 6.500 14.500ZM9.500 14.500C13 14 15 11 16 8C12 9 10 11 9.500 14.500ZM0 14.500L4 12.500L6 15ZM16 14.500L12 12.500L10 15Z" fill="#f6b529" />
  </Svg>,
  <Svg>
    <path d="M0 1H16V8H0Z" fill="#0e7d80" />
    <path d="M1.500 3H14.500M1.500 5.500H9" stroke="#93e3e1" strokeDasharray="1.500 1" />
    <path d="M7.500 7C9 5 12 4.500 13.500 6L15.500 13C15 15.500 12 16 11 15Z" fill="#e3e3e3" stroke="#777" strokeWidth=".7" />
  </Svg>,
  <Svg>
    <rect width="14" height="15" x="1" fill="#f6f6f6" />
    <path d="M3 12.500C7 9.500 8.500 5 7.500 2.500C6.500 5 9.500 9.500 13 9.500C10 8.500 6 9.500 3 12.500Z" stroke="#d6202a" strokeWidth="1" />
    <circle cx="12.500" cy="3" r="1.400" stroke="#777" strokeWidth=".8" />
  </Svg>,
  <Xampp />,
  <Svg>
    <ellipse cx="8" cy="6.500" rx="7.200" ry="5.500" fill="#e9e9e9" />
    <path d="M8 10L11 15.500L12 9.500Z" fill="#d5d5d5" />
  </Svg>,
  <Svg>
    <path d="M5.500 1H10.500L16 10.500H11Z" fill="#fbc52c" />
    <path d="M5.500 1L0 10.500L2.500 15L8 5.500Z" fill="#1ea362" />
    <path d="M5 10.500H16L13.500 15H2.500Z" fill="#4688f1" />
  </Svg>,
  <Svg>
    <path d="M2 9L6 5L10 7L13 3L15 5L13 9L14 12L10 12L7 13L3 14L1 12Z" fill="#8d8d8d" />
    <path d="M5 6L11 6.500L12 10L7 12Z" fill="#c8352d" />
    <path d="M3 13L6 10M12 5L15 3M7 9H10" stroke="#ececec" />
  </Svg>,
  <Svg>
    <path d="M2 1V16" stroke="#fff" strokeWidth="1.600" />
    <path d="M3 2.500H9V9H3ZM9 4L15.500 4.500L14.500 9H9Z" fill="#fff" />
  </Svg>,
  <Svg>
    <circle cx="8" cy="8" r="7.800" fill="#cf2f3b" />
    <path d="M4.500 4V11.500H7.500V7.500H4.500M10 5V11.500M12 6.500V10" stroke="#fff" strokeWidth="1.500" />
  </Svg>,
  <Svg>
    <path d="M5.500 4.500H14.500V11.500H5.500ZM7 14.500H14M2.500 1V7M.8 2V5H4.200V2M2.500 7V14.500H6" stroke="#e6e6e6" strokeWidth="1.200" />
    <path d="M7.500 8L15 15.500M15 8L7.500 15.500" stroke="#e21a1a" strokeWidth="2" />
  </Svg>,
  <Svg>
    <path d="M0 5.500H3L7 2V14L3 10.500H0Z" fill="#fff" />
    <path d="M9 5.500C10.500 7 10.500 9 9 10.500M11 3.500C13.500 6 13.500 10 11 12.500M13 2C16 5.500 16 10.500 13 14" stroke="#e6e6e6" strokeWidth="1.100" />
  </Svg>,
];

function Taskbar() {
  return (
    <div className="flex h-10 items-center border-t border-[#14110f] bg-[radial-gradient(ellipse_130px_50px_at_660px_10px,#6d563f_0,transparent_100%),radial-gradient(ellipse_90px_50px_at_1255px_15px,#8b6642_0,transparent_100%),radial-gradient(ellipse_220px_60px_at_1600px_20px,#54432b_0,transparent_100%),linear-gradient(90deg,#14110f,#332d27_8%,#2d2722_33%,#241c18_55%,#241b18_62%,#4d3f2e_68%,#423626_82%,#37301f_92%,#2b241c)] shadow-[inset_0_1px_0_rgba(255,255,255,.45)]">
      <div className="flex w-[179.500px] shrink-0 items-center">
        <svg width="38" height="38" viewBox="0 0 38 38" className="ml-2">
          <defs>
            <radialGradient id="orb" cx=".5" cy=".9" r=".9">
              <stop offset="0" stopColor="#25c9f5" />
              <stop offset=".45" stopColor="#1272ae" />
              <stop offset=".8" stopColor="#27496a" />
              <stop offset="1" stopColor="#9fb5c7" />
            </radialGradient>
          </defs>
          <circle cx="19" cy="19" r="18" fill="url(#orb)" stroke="#17334a" />
          <path d="M4 15A16 14 0 0 1 34 15C26 20 12 20 4 15Z" fill="#fff" opacity=".3" />
          <path d="M11 10C14 8 16 9 18 10L16.500 18C14 16.500 12 17 9.500 18Z" fill="#ee5a24" />
          <path d="M20 11C23 12.500 26 12 29 10.500L27 19C24 20 21 20 18.500 18.500Z" fill="#8cc63f" />
          <path d="M9 20C12 18.500 14 18.500 16 20L14.500 28C12 26.500 10 26.500 7.500 28Z" fill="#2fa3e6" />
          <path d="M18 21C21 22 24 22 26.500 21L25 29C22 30 19 30 16.500 28.500Z" fill="#fbc22d" />
        </svg>
        <svg width="34" height="36" viewBox="0 0 34 30" preserveAspectRatio="none" className="ml-[25px]">
          <path d="M2 5H10L12 2H20L22 5H32V27H2Z" fill="#edd88c" />
          <path d="M3 2H14V8H3Z" fill="#f6efd0" />
          <path d="M4 2H8V4H4Z" fill="#2fae3c" />
          <path d="M12 4H19V6H12Z" fill="#d53" />
          <path d="M21 6H29V8H21Z" fill="#38a3e0" />
          <path d="M2 9H32V27H2Z" fill="#f7e8a9" />
          <path d="M6 29V22C6 18 28 18 28 22V29H23V24H11V29Z" fill="#8ccbea" stroke="#d7effb" />
        </svg>
        <svg width="28" height="28" viewBox="0 0 28 28" className="mt-1 ml-[29px]">
          <path d="M8 1H27V24L22 27H1V4Z" fill="#5fa9d6" />
          <path d="M22 4V27M25 2V25" stroke="#3b7fae" />
          <path d="M2 4H21V26H2Z" fill="#86c3e6" />
          <ellipse cx="11" cy="14" rx="9" ry="10" fill="#ef7a21" />
          <path d="M8 8L17 14L8 20Z" fill="#fff" />
        </svg>
      </div>
      {apps.map((a, i) => (
        <div key={i} className="flex h-full w-[60.220px] shrink-0 items-center justify-center">
          {a.on ? (
            <span
              className={`flex h-[38px] w-[57px] items-center justify-center rounded-[3px] border ${
                a.on === "focus"
                  ? "border-[#e5e2e0] bg-[linear-gradient(135deg,#d2cfcd,#9b9592_50%,#8b8481_51%,#b4afac)]"
                  : "border-[#97918c] bg-[linear-gradient(160deg,#a5a09b,#625b56_45%,#39312c_60%,#4b423c)]"
              }`}
            >
              {a.icon}
            </span>
          ) : (
            a.icon
          )}
        </div>
      ))}
      <div className="ml-[3px] flex w-[384px] shrink-0">
        {tray.map((n, i) => (
          <span key={i} className="flex w-6 justify-center">
            {n}
          </span>
        ))}
      </div>
      <div className="flex-1 text-center text-[12px] leading-[17px] tracking-[-0.4px] text-white">
        <div>10:16 AM</div>
        <div>10/8/2014</div>
      </div>
      <div className="h-[38px] w-[14px] shrink-0 border border-[#8a837c] bg-[linear-gradient(100deg,#55504b,#1c1815_60%)]" />
    </div>
  );
}

export default function App() {
  return (
    <div className={`h-[1080px] w-[1920px] overflow-hidden bg-[#fafafa] ${ui}`}>
      <TabStrip />
      <Toolbar />
      <Bookmarks />
      <Page />
      <Taskbar />
    </div>
  );
}
